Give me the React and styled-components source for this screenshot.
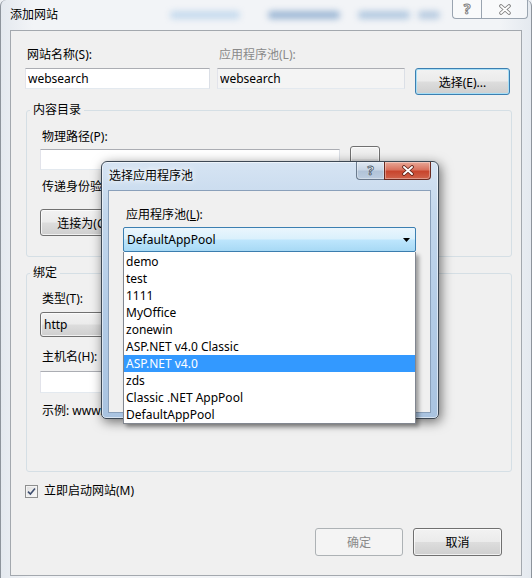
import styled, { createGlobalStyle } from 'styled-components'

const GlobalStyle = createGlobalStyle`
  html, body { margin:0; padding:0; background:#eef1f5; }
  body {
    font-family:"Noto Sans", "Noto Sans CJK SC", sans-serif;
    font-size:12px;
    color:#000;
  }
  * { box-sizing:border-box; }
`

const Window = styled.div`
  position:relative;
  width:532px;
  height:578px;
  display:flex;
  flex-direction:column;
  padding:0 9px 2px 9px;
  background:linear-gradient(90deg, #e4e9ef, #f2f4f7 6%, #f2f4f7 94%, #e4e9ef);
  border-left:1px solid #8d949c;
  border-right:1px solid #8d949c;
  border-radius:6px 6px 0 0;
`

const TitleBar = styled.div`
  height:30px;
  display:flex;
  align-items:flex-start;
  flex-shrink:0;
`

const TitleText = styled.div`
  line-height:30px;
  white-space:nowrap;
`

const Glass = styled.div`
  display:flex;
  align-items:center;
  height:30px;
  margin-left:112px;
`

const Blob = styled.span`
  display:block;
  width:${p => p.$w}px;
  height:8px;
  margin-right:${p => p.$gap || 0}px;
  border-radius:4px;
  background:${p => p.$c};
  filter:blur(3px);
`

const CaptionButtons = styled.div`
  display:flex;
  margin-left:auto;
  margin-right:-6px;
`

const CaptionButton = styled.div`
  width:${p => p.$w}px;
  height:19px;
  display:flex;
  align-items:center;
  justify-content:center;
  border:1px solid #9aa4b0;
  border-top:none;
  background:rgba(255,255,255,.55);
  &:first-child { border-radius:0 0 0 4px; border-right:none; }
  &:last-child { border-radius:0 0 4px 0; }
`

const HollowGlyph = styled.span`
  font-size:14px;
  font-weight:700;
  line-height:1;
  color:#fff;
  -webkit-text-stroke:1px #808080;
`

const Content = styled.div`
  flex:1;
  display:flex;
  flex-direction:column;
  background:#f0f0f0;
  border:1px solid #a3a8ae;
  padding:16px 9px 0 14px;
`

const TopRow = styled.div`
  display:flex;
  align-items:flex-start;
`

const Field = styled.div`
  display:flex;
  flex-direction:column;
  gap:5px;
  width:${p => p.$w}px;
  margin-right:${p => p.$gap || 0}px;
`

const Label = styled.div`
  line-height:16px;
  padding-left:${p => p.$indent ?? 2}px;
  color:${p => p.$muted ? '#8a8a8a' : '#000'};
  white-space:nowrap;
  margin-top:${p => p.$top || 0}px;
`

const TextBox = styled.input`
  display:block;
  width:${p => (p.$w ? `${p.$w}px` : '100%')};
  height:${p => p.$h || 21}px;
  margin:${p => p.$top || 0}px 0 0;
  padding:0 2px;
  font:inherit;
  color:#000;
  border:1px solid;
  border-color:#abadb3 #dbdfe6 #e3e9ef #e2e3ea;
  background:${p => p.readOnly ? '#f4f4f4' : '#fff'};
  outline:none;
  flex-shrink:0;
`

const Btn = styled.button`
  width:${p => p.$w}px;
  height:${p => p.$h || 27}px;
  margin-top:${p => p.$top || 0}px;
  padding:0;
  font:inherit;
  color:${p => (p.disabled ? '#8a8a8a' : '#000')};
  border:1px solid ${p => (p.disabled ? '#adb2b5' : p.$focus ? '#3c7fb1' : '#707070')};
  border-radius:3px;
  background:${p => p.disabled
    ? '#f4f4f4'
    : 'linear-gradient(#f2f2f2 0%, #ebebeb 49%, #dddddd 51%, #cfcfcf 100%)'};
  box-shadow:${p => p.disabled
    ? 'none'
    : p.$focus
      ? 'inset 0 0 0 1px #a6def6'
      : 'inset 0 0 0 1px rgba(255,255,255,.7)'};
  flex-shrink:0;
`

const Group = styled.fieldset`
  margin:${p => p.$top}px 0 0 1px;
  border:1px solid #d5dfe5;
  border-radius:3px;
  padding:${p => p.$pad};
  min-width:0;
`

const Legend = styled.legend`
  padding:0 3px;
  margin-left:-10px;
  line-height:16px;
`

const PathRow = styled.div`
  display:flex;
  align-items:center;
  gap:10px;
  margin-top:1px;
`

const ButtonRow = styled.div`
  display:flex;
  gap:8px;
  margin-top:${p => p.$top || 0}px;
`

const Combo = styled.div`
  display:flex;
  align-items:center;
  justify-content:space-between;
  width:${p => p.$w}px;
  height:25px;
  margin-top:5px;
  padding:0 6px 0 3px;
  border:1px solid #707070;
  border-radius:3px;
  background:linear-gradient(#f2f2f2 0%, #ebebeb 49%, #dddddd 51%, #cfcfcf 100%);
  box-shadow:inset 0 0 0 1px rgba(255,255,255,.7);
`

const CheckRow = styled.label`
  display:flex;
  align-items:center;
  gap:6px;
  margin-top:11px;
  line-height:16px;
`

const CheckBox = styled.span`
  width:13px;
  height:13px;
  display:flex;
  align-items:center;
  justify-content:center;
  border:1px solid #8e8f8f;
  background:linear-gradient(135deg, #dedede, #fbfbfb);
  box-shadow:inset 0 0 0 1px #f4f4f4;
`

const Footer = styled.div`
  display:flex;
  justify-content:flex-end;
  gap:10px;
  margin-top:auto;
  padding:0 10px 19px 0;
`

/* 选择应用程序池 dialog, floating over the form */
const Dialog = styled.div`
  position:absolute;
  left:100px;
  top:161px;
  width:338px;
  height:258px;
  display:flex;
  flex-direction:column;
  padding:0 7px 5px 6px;
  border:1px solid #3d4854;
  border-radius:6px 6px 5px 5px;
  background:linear-gradient(#d6e4f3 0%, #c3d7ec 20%, #b2cbe6 60%, #a9c3e0 100%);
  box-shadow:inset 0 0 0 1px rgba(255,255,255,.55), 2px 3px 12px rgba(0,0,0,.55);
  z-index:5;
`

const DialogTitle = styled.div`
  height:28px;
  display:flex;
  align-items:flex-start;
  flex-shrink:0;
`

const DialogCaption = styled.div`
  line-height:28px;
  padding-left:1px;
  text-shadow:0 0 8px #fff, 0 0 4px #fff;
`

const DialogButtons = styled.div`
  display:flex;
  margin-left:auto;
`

const GlassButton = styled.div`
  width:${p => p.$w}px;
  height:18px;
  display:flex;
  align-items:center;
  justify-content:center;
  border:1px solid ${p => (p.$close ? '#6a2a20' : '#6b7b8e')};
  border-top:none;
  background:${p => p.$close
    ? 'linear-gradient(#e9a897 0%, #d9735f 45%, #c8452d 55%, #d0634b 100%)'
    : 'linear-gradient(#dfe8f2 0%, #c9d6e5 45%, #b1c3d8 55%, #bccde0 100%)'};
  box-shadow:inset 0 0 0 1px rgba(255,255,255,.35);
  &:first-child { border-radius:0 0 0 4px; border-right:none; }
  &:last-child { border-radius:0 0 4px 0; }
`

const HelpGlyph = styled.span`
  font-size:13px;
  font-weight:700;
  line-height:1;
  color:#fff;
  -webkit-text-stroke:0.8px #4a5868;
`

const DialogBody = styled.div`
  flex:1;
  background:#f0f0f0;
  border:1px solid #8aa0ba;
  padding:16px 14px 0 14px;
`

const PoolCombo = styled.div`
  position:relative;
  margin-top:4px;
`

const PoolField = styled.div`
  height:25px;
  display:flex;
  align-items:center;
  justify-content:space-between;
  padding:0 5px 0 3px;
  border:1px solid #3c7fb1;
  border-radius:2px;
  background:linear-gradient(#eaf6fd 0%, #d9f0fc 49%, #bee6fd 51%, #a7d9f5 100%);
`

const PoolList = styled.ul`
  position:absolute;
  top:100%;
  left:0;
  right:0;
  margin:0;
  padding:1px 0 0;
  list-style:none;
  background:#fff;
  border:1px solid #828790;
  border-top:none;
  box-shadow:3px 3px 4px rgba(0,0,0,.35);
`

const PoolItem = styled.li`
  height:17px;
  line-height:17px;
  padding-left:2px;
  white-space:nowrap;
  color:${p => (p.$active ? '#fff' : '#000')};
  background:${p => (p.$active ? '#3399ff' : 'transparent')};
`

const Arrow = () => (
  <svg width="7" height="4" viewBox="0 0 7 4">
    <polygon points="0,0 7,0 3.5,4" fill="#000" />
  </svg>
)

const pools = [
  'demo',
  'test',
  '1111',
  'MyOffice',
  'zonewin',
  'ASP.NET v4.0 Classic',
  'ASP.NET v4.0',
  'zds',
  'Classic .NET AppPool',
  'DefaultAppPool',
]

export default function App() {
  return (
    <>
      <GlobalStyle />
      <Window>
        <TitleBar>
          <TitleText>添加网站</TitleText>
          <Glass>
            <Blob $w={70} $gap={28} $c="#c5daee" />
            <Blob $w={72} $gap={18} $c="#9cb7d5" />
            <Blob $w={52} $gap={8} $c="#b1c8e0" />
            <Blob $w={22} $c="#b6cae0" />
          </Glass>
          <CaptionButtons>
            <CaptionButton $w={29}>
              <HollowGlyph>?</HollowGlyph>
            </CaptionButton>
            <CaptionButton $w={47}>
              <svg width="14" height="11" viewBox="0 0 14 11">
                <path d="M3 2 L11 9 M11 2 L3 9" stroke="#7d7d7d" strokeWidth="3.6" strokeLinecap="round" />
                <path d="M3 2 L11 9 M11 2 L3 9" stroke="#fff" strokeWidth="1.8" strokeLinecap="round" />
              </svg>
            </CaptionButton>
          </CaptionButtons>
        </TitleBar>

        <Content>
          <TopRow>
            <Field $w={185} $gap={7}>
              <Label>网站名称(S):</Label>
              <TextBox defaultValue="websearch" />
            </Field>
            <Field $w={188} $gap={10}>
              <Label $muted>应用程序池(L):</Label>
              <TextBox defaultValue="websearch" readOnly />
            </Field>
            <Btn $w={95} $top={21} $focus>选择(E)...</Btn>
          </TopRow>

          <Group $top={7} $pad="11px 12px 20px 13px">
            <Legend>内容目录</Legend>
            <Label>物理路径(P):</Label>
            <PathRow>
              <TextBox $w={300} />
              <Btn $w={30} $h={26}>...</Btn>
            </PathRow>
            <Label $top={7}>传递身份验证:</Label>
            <ButtonRow $top={14}>
              <Btn $w={95}>连接为(C)...</Btn>
            </ButtonRow>
          </Group>

          <Group $top={8} $pad="10px 12px 52px 13px">
            <Legend>绑定</Legend>
            <Label>类型(T):</Label>
            <Combo $w={110}>
              <span>http</span>
              <Arrow />
            </Combo>
            <Label $top={12}>主机名(H):</Label>
            <TextBox $w={300} $h={22} $top={6} />
            <Label $top={10}>示例: www.contoso.com</Label>
          </Group>

          <CheckRow>
            <CheckBox>
              <svg width="9" height="9" viewBox="0 0 9 9">
                <path d="M1 4.6 L3.4 7 L8 1.6" fill="none" stroke="#3f4f70" strokeWidth="1.6" />
              </svg>
            </CheckBox>
            立即启动网站(M)
          </CheckRow>

          <Footer>
            <Btn $w={88} $h={28} disabled>确定</Btn>
            <Btn $w={89} $h={28}>取消</Btn>
          </Footer>
        </Content>

        <Dialog>
          <DialogTitle>
            <DialogCaption>选择应用程序池</DialogCaption>
            <DialogButtons>
              <GlassButton $w={28}>
                <HelpGlyph>?</HelpGlyph>
              </GlassButton>
              <GlassButton $w={47} $close>
                <svg width="14" height="11" viewBox="0 0 14 11">
                  <path d="M3 2 L11 9 M11 2 L3 9" stroke="#5b2118" strokeWidth="3.6" strokeLinecap="round" />
                  <path d="M3 2 L11 9 M11 2 L3 9" stroke="#fff" strokeWidth="1.9" strokeLinecap="round" />
                </svg>
              </GlassButton>
            </DialogButtons>
          </DialogTitle>
          <DialogBody>
            <Label $indent={3}>
              应用程序池(<u>L</u>):
            </Label>
            <PoolCombo>
              <PoolField>
                <span>DefaultAppPool</span>
                <Arrow />
              </PoolField>
              <PoolList>
                {pools.map((name, i) => (
                  <PoolItem key={name + i} $active={name === 'ASP.NET v4.0'}>
                    {name}
                  </PoolItem>
                ))}
              </PoolList>
            </PoolCombo>
          </DialogBody>
        </Dialog>
      </Window>
    </>
  )
}
